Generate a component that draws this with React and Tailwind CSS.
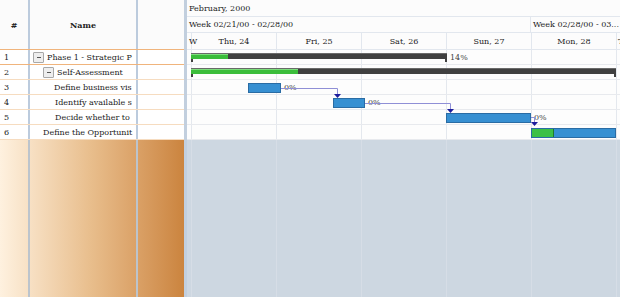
import React from "react";

const rows = [
  { n: 1, name: "Phase 1 - Strategic P", indent: 3, box: true },
  { n: 2, name: "Self-Assessment", indent: 13, box: true },
  { n: 3, name: "Define business vis", indent: 24 },
  { n: 4, name: "Identify available s", indent: 25 },
  { n: 5, name: "Decide whether to", indent: 25 },
  { n: 6, name: "Define the Opportunit", indent: 13 },
];

function DayCols() {
  return (
    <div className="absolute inset-0 flex">
      <div className="w-[5px] shrink-0 border-r border-[#e4e8ee]" />
      <div className="w-[85px] shrink-0 border-r border-[#e4e8ee]" />
      <div className="w-[85px] shrink-0 border-r border-[#e4e8ee]" />
      <div className="w-[85px] shrink-0 border-r border-[#e4e8ee]" />
      <div className="w-[85px] shrink-0 border-r border-[#e4e8ee]" />
      <div className="w-[85px] shrink-0 border-r border-[#e4e8ee]" />
      <div className="flex-1" />
    </div>
  );
}

function Summary({ left, width, green, label }) {
  return (
    <>
      <div
        className="absolute top-[3px] h-[6px] bg-[#404040] border-t border-[#6a6a6a]"
        style={{ left, width }}
      >
        <div className="h-full bg-[#3bbd3b] border-t border-[#7de07d]" style={{ width: green }} />
      </div>
      <div className="absolute top-[9px] w-[2px] h-[3px] bg-[#404040]" style={{ left }} />
      <div className="absolute top-[9px] w-[2px] h-[3px] bg-[#404040]" style={{ left: left + width - 2 }} />
      {label && (
        <div className="absolute top-[3px] text-[8px] leading-[10px] text-[#444]" style={{ left: left + width + 3 }}>
          {label}
        </div>
      )}
    </>
  );
}

function Task({ left, width, green = 0, label }) {
  return (
    <>
      <div
        className="absolute top-[3px] h-[10px] bg-[#3790d2] border border-[#2a6ca4] flex"
        style={{ left, width }}
      >
        {green > 0 && <div className="h-full bg-[#3cc046] border-r border-[#1f7a2a]" style={{ width: green }} />}
      </div>
      {label && (
        <div className="absolute top-[3px] text-[8px] leading-[10px] text-[#444]" style={{ left: left + width + 3 }}>
          {label}
        </div>
      )}
    </>
  );
}

export default function App() {
  const font = { fontFamily: '"DejaVu Serif", serif' };
  return (
    <div className="w-[620px] h-[300px] bg-white overflow-hidden" style={font}>
      <div className="flex h-[297px]">
        {/* Left grid */}
        <div className="w-[184px] shrink-0 flex flex-col text-[8px] text-[#222]">
          <div className="h-[50px] flex bg-[#fbfbfb] border-b border-[#f0b47c]">
            <div className="w-[30px] border-r-2 border-[#bccbdd] flex items-center justify-center font-bold">#</div>
            <div className="w-[108px] border-r-2 border-[#bccbdd] flex items-center justify-center font-bold">Name</div>
            <div className="flex-1" />
          </div>
          {rows.map((r, i) => (
            <div
              key={r.n}
              className={
                "h-[15px] flex bg-white border-b " +
                (i === 0 ? "border-[#f0b47c]" : "border-[#f6dcc0]")
              }
            >
              <div className="w-[30px] border-r-2 border-[#bccbdd] pl-[4px] leading-[15px]">{r.n}</div>
              <div className="w-[108px] border-r-2 border-[#bccbdd] flex items-center overflow-hidden whitespace-nowrap pr-[6px]">
                <div className="flex items-center shrink-0" style={{ paddingLeft: r.indent }}>
                  {r.box && (
                    <div className="w-[11px] h-[11px] mr-[3px] border border-[#a8a8a8] bg-[#eeeeee] rounded-[1px] flex items-center justify-center">
                      <div className="w-[4px] h-[1px] bg-[#555]" />
                    </div>
                  )}
                  <span className="leading-[15px]">{r.name}</span>
                </div>
              </div>
              <div className="flex-1" />
            </div>
          ))}
          <div className="flex-1 flex bg-gradient-to-r from-[#fef1df] via-[#e8bd8b] to-[#cb843e]">
            <div className="w-[30px] border-r-2 border-[#bcc4cc]" />
            <div className="w-[108px] border-r-2 border-[#bcc4cc]" />
            <div className="flex-1" />
          </div>
        </div>
        {/* Separator */}
        <div className="w-[3px] shrink-0 bg-[#c2cfde]" />
        {/* Chart */}
        <div className="w-[433px] shrink-0 flex flex-col text-[8px] text-[#222] relative">
          <div className="h-[17px] border-b border-[#e2e7ee] bg-[#fcfcfc] pl-[2px] pt-[1px] leading-[16px]">February, 2000</div>
          <div className="h-[16px] border-b border-[#e2e7ee] bg-[#fcfcfc] flex leading-[16px] whitespace-nowrap">
            <div className="w-[344px] shrink-0 pl-[2px] border-r border-[#e2e7ee]">Week 02/21/00 - 02/28/00</div>
            <div className="flex-1 pl-[2px] overflow-hidden">Week 02/28/00 - 03...</div>
          </div>
          <div className="h-[17px] border-b border-[#e2e7ee] bg-[#fcfcfc] flex leading-[17px] whitespace-nowrap">
            <div className="w-[5px] shrink-0 border-r border-[#e2e7ee] pl-[2px] overflow-visible">W</div>
            <div className="w-[85px] shrink-0 border-r border-[#e2e7ee] text-center">Thu, 24</div>
            <div className="w-[85px] shrink-0 border-r border-[#e2e7ee] text-center">Fri, 25</div>
            <div className="w-[85px] shrink-0 border-r border-[#e2e7ee] text-center">Sat, 26</div>
            <div className="w-[85px] shrink-0 border-r border-[#e2e7ee] text-center">Sun, 27</div>
            <div className="w-[85px] shrink-0 border-r border-[#e2e7ee] text-center">Mon, 28</div>
            <div className="flex-1 pl-[1px] overflow-visible">T</div>
          </div>
          {[0, 1, 2, 3, 4, 5].map((i) => (
            <div key={i} className="h-[15px] relative border-b border-[#e8eaee] bg-[#fdfdfd]">
              <DayCols />
              {i === 0 && <Summary left={4} width={256} green={37} label="14%" />}
              {i === 1 && <Summary left={4} width={425} green={107} />}
              {i === 2 && <Task left={61} width={33} label="0%" />}
              {i === 3 && <Task left={146} width={32} label="0%" />}
              {i === 4 && <Task left={259} width={85} label="0%" />}
              {i === 5 && <Task left={344} width={85} green={22} />}
            </div>
          ))}
          <div className="flex-1 relative bg-[#cdd7e1]">
            <div className="absolute inset-0 flex">
              <div className="w-[5px] shrink-0 border-r border-[#d6dde6]" />
              <div className="w-[85px] shrink-0 border-r border-[#d6dde6]" />
              <div className="w-[85px] shrink-0 border-r border-[#d6dde6]" />
              <div className="w-[85px] shrink-0 border-r border-[#d6dde6]" />
              <div className="w-[85px] shrink-0 border-r border-[#d6dde6]" />
              <div className="w-[85px] shrink-0 border-r border-[#d6dde6]" />
              <div className="flex-1" />
            </div>
          </div>
          <svg className="absolute left-0 top-0 pointer-events-none" width="433" height="150">
            <polyline points="94,88.5 150.5,88.5 150.5,95" fill="none" stroke="#8f8fd6" strokeWidth="1" />
            <polygon points="147,94 154,94 150.5,98" fill="#1c1c9c" />
            <polyline points="178,103.5 263.5,103.5 263.5,110" fill="none" stroke="#8f8fd6" strokeWidth="1" />
            <polygon points="260,109 267,109 263.5,113" fill="#1c1c9c" />
            <polyline points="344,117.5 347.5,117.5 347.5,123" fill="none" stroke="#8f8fd6" strokeWidth="1" />
            <polygon points="344,122 351,122 347.5,126" fill="#1c1c9c" />
          </svg>
        </div>
      </div>
      <div className="h-[3px] bg-white" />
    </div>
  );
}
